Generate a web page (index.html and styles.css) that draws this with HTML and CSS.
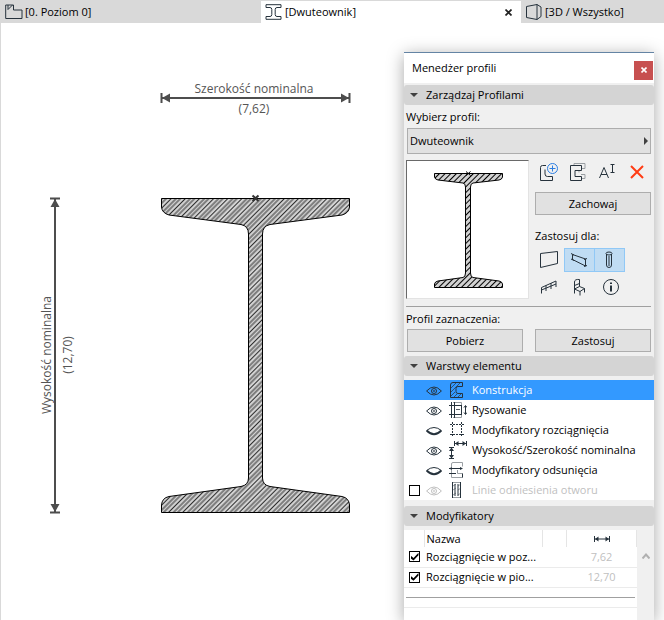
FILE: index.html
```html
<!DOCTYPE html>
<html lang="pl">
<head>
<meta charset="utf-8">
<title>Menedżer profili</title>
<link rel="stylesheet" href="styles.css">
</head>
<body>
<nav class="tabs">
  <button class="tab" type="button">
    <svg class="tab-icon" width="18" height="16" viewBox="0 0 18 16"><path d="M.7 1H8.500V6H17V14.500H.700ZM3 1v4.500L7.500 1"/></svg>
    <span>[0. Poziom 0]</span>
  </button>
  <div class="tab tab-active">
    <svg class="tab-icon" width="18" height="16" viewBox="0 0 18 16"><path d="M1 .700H16V3.500H12Q10.200 3.500 10.200 5.500V10.500Q10.200 12.500 12 12.500H16V15.300H1V12.500H5Q6.800 12.500 6.800 10.500V5.500Q6.800 3.500 5 3.500H1Z"/></svg>
    <span>[Dwuteownik]</span>
    <button class="tab-close" type="button" aria-label="Zamknij kartę"><svg width="7" height="7" viewBox="0 0 7 7"><path d="M.5.5l6 6M6.500.5l-6 6"/></svg></button>
  </div>
  <button class="tab" type="button">
    <svg class="tab-icon" width="18" height="18" viewBox="0 0 18 18"><path d="M1.500 3.500L12 1.500V16.500L1.500 14.500ZM12 1.500L16 4V13.500L12 16.500"/></svg>
    <span>[3D / Wszystko]</span>
  </button>
</nav>

<main class="canvas">
  <svg class="drawing" width="400" height="596" viewBox="1 23 400 596" role="img" aria-label="Przekrój dwuteownika">
    <defs>
      <pattern id="hatch" width="10" height="40" patternUnits="userSpaceOnUse" patternTransform="rotate(45)">
        <path d="M1.500 0V40M5 0V40M8 0V40" stroke="#000" stroke-width=".8"/>
      </pattern>
      <path id="beam" d="M161.500 198.500H349.500V207Q349 213 342 215L270 224.500Q262.500 226 262.500 234V478Q262.500 485 270 486.500L342 496.500Q349 498 349.500 505V512.500H161.500V505Q162 498 169 496.500L241 486.500Q248.500 485 248.500 478V234Q248.500 226 241 224.500L169 215Q162 213 161.500 207Z"/>
    </defs>
    <use href="#beam" class="body-fill"/>
    <use href="#beam" class="profile" fill="url(#hatch)"/>
    <path class="origin" d="M252.500 195.500L258.500 201M258.500 195.500L252.500 201"/>
    <g class="dimension">
      <path d="M162 98H349M55 199V512" class="dim-line"/>
      <path d="M161.500 93V103M349.500 93V103M50 198.500H60M50 512.500H60" class="dim-end"/>
      <path d="M162 98L170 93.500V102.500ZM349 98L341 93.500V102.500ZM55 199L50.500 207H59.500ZM55 512L50.500 504H59.500Z" class="dim-head"/>
      <text x="254" y="93">Szerokość nominalna</text>
      <text x="254" y="113">(7,62)</text>
      <text transform="translate(51 355) rotate(-90)">Wysokość nominalna</text>
      <text transform="translate(72 355) rotate(-90)">(12,70)</text>
    </g>
  </svg>
</main>

<aside class="palette">
  <header class="palette-title">
    <h1>Menedżer profili</h1>
    <button class="palette-close" type="button" aria-label="Zamknij"><svg width="6" height="6" viewBox="0 0 6 6"><path d="M.5.5l5 5M5.500.5l-5 5"/></svg></button>
  </header>

  <section>
    <button class="section-head" type="button"><span class="caret"></span>Zarządzaj Profilami</button>
    <div class="manage">
      <label class="caption" for="profile">Wybierz profil:</label>
      <div class="picker">
        <select id="profile"><option>Dwuteownik</option></select>
      </div>
      <div class="profile-row">
        <div class="preview">
          <svg width="121" height="137" viewBox="407 161 121 137">
            <defs>
              <pattern id="hatch-small" width="4" height="40" patternUnits="userSpaceOnUse" patternTransform="rotate(45)">
                <path d="M1.500 0V40" stroke="#000" stroke-width="1"/>
              </pattern>
              <path id="beam-small" d="M434.500 173.500H502.500V177Q502 179.500 499 180L473 183Q470.500 183.500 470.500 187V273Q470.500 277 473 277.500L499 281Q502 281.500 502.500 284V287.500H434.500V284Q435 281.500 438 281L463 277.500Q465.500 277 465.500 273V187Q465.500 183.500 463 183L438 180Q435 179.500 434.500 177Z"/>
            </defs>
            <use href="#beam-small" class="body-fill"/>
            <use href="#beam-small" class="profile" fill="url(#hatch-small)"/>
            <path class="origin-small" d="M466 171.500L470.500 175.500M470.500 171.500L466 175.500"/>
          </svg>
        </div>
        <div class="actions">
          <div class="tools">
            <button type="button" aria-label="Nowy profil"><svg width="20" height="20" viewBox="0 0 20 20"><path d="M7 3.500H3.500Q1.500 3.500 1.500 5.500V18.500H13.500V14.500H8.500Q6 14.500 6 12V7.500"/><circle class="blue" cx="13.500" cy="6.500" r="5"/><path class="blue" d="M13.500 3.500V9.500M10.500 6.500H16.500"/></svg></button>
            <button type="button" aria-label="Powiel profil"><svg width="20" height="20" viewBox="0 0 20 20"><path class="soft" d="M6 4V1.500H17V6.500H14M11 10.500V8.500M13 12.500H17V16.500H14"/><path d="M2.500 3.500H13.500V8.500H7V14.500H13.500V18.500H2.500Z"/></svg></button>
            <button type="button" aria-label="Zmień nazwę"><svg width="20" height="20" viewBox="0 0 20 20"><path d="M1.500 16L6 5.500L10.500 16M3 12.500H9M12.500 2.500H16.500M12.500 10.500H16.500M14.500 2.500V10.500"/></svg></button>
            <button type="button" aria-label="Usuń profil"><svg width="20" height="20" viewBox="0 0 20 20"><path class="red" d="M4 4L16 16M16 4L4 16"/></svg></button>
          </div>
          <button class="push" type="button">Zachowaj</button>
          <p class="caption use-for">Zastosuj dla:</p>
          <div class="uses">
            <button type="button" aria-label="Ściana"><svg width="20" height="20" viewBox="0 0 20 20"><path d="M.5 3.500L17.500 1.500V13.500L.5 17.500Z"/></svg></button>
            <button type="button" aria-label="Belka" aria-pressed="true"><svg width="20" height="20" viewBox="0 0 20 20"><path d="M2.500 4.500V10M2.500 4.500L15.500 9M2.500 9.500L15.500 16M15.500 9V16M1 3.500L4 5M1 9L4 10.500M14 9.500L17 8.500M14 16.500L17 15.500"/></svg></button>
            <button type="button" aria-label="Słup" aria-pressed="true"><svg width="20" height="20" viewBox="0 0 20 20"><path d="M6.500 4V15Q6.500 17.500 9 17.500T11.500 15V4M9 6V16"/><ellipse cx="9" cy="3.500" rx="3" ry="1.500"/></svg></button>
            <button type="button" aria-label="Balustrada"><svg width="20" height="20" viewBox="0 0 20 20"><path d="M1.500 16.500V10.500L16 4V10M1.500 13L16 7M6 8.500V14M11 6V12"/></svg></button>
            <button type="button" aria-label="Obiekt"><svg width="20" height="20" viewBox="0 0 20 20"><path d="M4.500 16.500V5Q4.500 2 9.500 2.500V9.500L4.500 12L10 14.500L14.500 11.500V15.500M14.500 11.500L9.500 9.500M10 14.500V18.500M4.500 8.500L9.500 6.500"/></svg></button>
            <button type="button" aria-label="Informacje"><svg width="20" height="20" viewBox="0 0 20 20"><circle cx="11" cy="10" r="7.500"/><path class="heavy" d="M11 8.500V14.500M11 5.500V7"/></svg></button>
          </div>
        </div>
      </div>
      <hr>
      <p class="caption">Profil zaznaczenia:</p>
      <div class="pair">
        <button class="push" type="button">Pobierz</button>
        <button class="push" type="button">Zastosuj</button>
      </div>
    </div>
  </section>

  <section>
    <button class="section-head" type="button"><span class="caret"></span>Warstwy elementu</button>
    <svg class="symbols" width="0" height="0" aria-hidden="true">
      <symbol id="eye" viewBox="0 0 16 10"><path d="M.6 5Q8-3 15.400 5Q8 13 .6 5Z"/><circle cx="8" cy="5" r="2.500"/><circle cx="8" cy="5" r=".5"/></symbol>
      <symbol id="eye-shut" viewBox="0 0 16 10"><path d="M.6 4.500Q8-1.500 15.400 4.500"/><path d="M.6 4.500Q8 12 15.400 4.500" stroke-width="2"/></symbol>
    </svg>
    <ul class="layers">
      <li class="layer layer-selected">
        <svg class="eye" width="16" height="10"><use href="#eye"/></svg>
        <svg class="kind" width="18" height="18" viewBox="0 0 18 18"><path d="M1.500 4Q1.500 1.500 4 1.500H13.500V5.500H9Q7 5.500 7 7.500V10.500Q7 12.500 9 12.500H13.500V16.500H1.500Z"/><path d="M2 7L7 2M2 11L11 2M2 15L6 11M5 16L8 13M9 16L13 12" stroke-width=".7"/></svg>
        <span>Konstrukcja</span>
      </li>
      <li class="layer">
        <svg class="eye" width="16" height="10"><use href="#eye"/></svg>
        <svg class="kind" width="18" height="18" viewBox="0 0 18 18"><path class="soft" d="M4 1.500H12.500V4M4 16.500H12.500V14"/><path d="M0 4.500H13M0 13.500H13M2.500 1V17M5.500 1V17M12.500 4V14"/><path d="M7 9l1-1 1 1 1-1 1 1" stroke-width=".8"/><path d="M16.500 5V13M15 6.500L16.500 4.500L18 6.500M15 11.500L16.500 13.500L18 11.500"/></svg>
        <span>Rysowanie</span>
      </li>
      <li class="layer">
        <svg class="eye" width="16" height="10"><use href="#eye-shut"/></svg>
        <svg class="kind" width="18" height="18" viewBox="0 0 18 18"><path stroke-dasharray="2 1" d="M1 3.500H15M1 13.500H15M3.500 1V16M12.500 1V16"/></svg>
        <span>Modyfikatory rozciągnięcia</span>
      </li>
      <li class="layer">
        <svg class="eye" width="16" height="10"><use href="#eye"/></svg>
        <svg class="kind" width="18" height="18" viewBox="0 0 18 18"><path d="M0 6.500H5M0 17.500H5M2.500 7V17M5.500 0V5M17.500 0V5M6 2.500H17"/><path class="solid" d="M2.500 6.500L0 10H5ZM2.500 17.500L0 14H5ZM6 2.500L9.500 0V5ZM17 2.500L13.500 0V5Z"/></svg>
        <span>Wysokość/Szerokość nominalna</span>
      </li>
      <li class="layer">
        <svg class="eye" width="16" height="10"><use href="#eye-shut"/></svg>
        <svg class="kind" width="18" height="18" viewBox="0 0 18 18"><path class="soft" d="M2.500 6V3Q2.500 1.500 4 1.500H13.500V5.500M13.500 12.500H8.500V9M2.500 9V16.500H13.500"/><path d="M0 7.500H13M0 12.500H7M13.500 12.500V16.500"/><path class="solid" d="M0 7.500L3 6V9ZM14 7.500L11 6V9Z"/></svg>
        <span>Modyfikatory odsunięcia</span>
      </li>
      <li class="layer layer-dim">
        <input type="checkbox" aria-label="Linie odniesienia otworu">
        <svg class="eye" width="16" height="10"><use href="#eye"/></svg>
        <svg class="kind" width="18" height="18" viewBox="0 0 18 18"><path class="soft" d="M3 1.500H12M3 16.500H12M4 5L7 3M4 9L7 7M4 14L7 12M9 5L12 3M9 9L12 7M9 14L12 12"/><path d="M3.500 1V17M11.500 1V17M6 3V15M9 3V15"/></svg>
        <span>Linie odniesienia otworu</span>
      </li>
    </ul>
  </section>

  <section class="modifiers">
    <button class="section-head" type="button"><span class="caret"></span>Modyfikatory</button>
    <div class="table-area">
      <div class="table-box">
        <table>
          <colgroup><col class="c-check"><col><col class="c-gap"><col class="c-value"></colgroup>
          <thead><tr>
            <th></th><th>Nazwa</th><th></th>
            <th class="value"><svg width="16" height="6" viewBox="0 0 16 6" role="img" aria-label="Długość"><path d="M.5 0V6M15.500 0V6M1 3H15"/><path class="solid" d="M1 3L4.500.5V5.500ZM15 3L11.500.5V5.500Z"/></svg></th>
          </tr></thead>
          <tbody>
            <tr><td><input type="checkbox" checked aria-label="Rozciągnięcie w poziomie"></td><td colspan="2">Rozciągnięcie w poz...</td><td class="value">7,62</td></tr>
            <tr><td><input type="checkbox" checked aria-label="Rozciągnięcie w pionie"></td><td colspan="2">Rozciągnięcie w pio...</td><td class="value">12,70</td></tr>
            <tr class="divider"><td colspan="4"><hr></td></tr>
          </tbody>
        </table>
      </div>
      <div class="scrollbar"><svg width="8" height="6" viewBox="0 0 8 6"><path d="M.5 5.500L4 1.500L7.500 5.500"/></svg></div>
    </div>
  </section>
</aside>
</body>
</html>
```
FILE: styles.css
```css
* {
  box-sizing: border-box;
}

body {
  margin: 0;
  min-height: 100vh;
  display: flex;
  flex-direction: column;
  position: relative;
  overflow: hidden;
  background: #fff;
  color: #000;
  font: 11px/16px "Open Sans", "Noto Sans", sans-serif;
}

button,
select {
  margin: 0;
  padding: 0;
  border: 0;
  background: none;
  color: inherit;
  font: inherit;
}

svg {
  display: block;
  flex: none;
  fill: none;
  stroke: #26323c;
}

h1,
p,
ul {
  margin: 0;
  padding: 0;
  font-size: inherit;
  font-weight: normal;
}

hr {
  margin: 0;
  border: 0;
  border-top: 1px solid #a0a0a0;
}

/* Document tabs */
.tabs {
  display: grid;
  grid-template-columns: 260px 260px 1fr;
  height: 23px;
  padding-left: 1px;
  border-top: 1px solid #d9d9d9;
  background: #d9d9d9;
}

.tab {
  display: flex;
  align-items: center;
  gap: 2px;
  padding-left: 4px;
}

.tab-active {
  background: #fff;
}

.tab-close {
  margin-left: auto;
  padding: 4px 9px;
}

.tab-close path {
  stroke: #222;
  stroke-width: 1.700;
}

/* Drawing */
.canvas {
  flex: 1;
  border-left: 1px solid #d9d9d9;
}

.body-fill {
  fill: #d2d2d2;
  stroke: none;
}

.profile {
  stroke: #000;
}

.origin {
  stroke: #333;
  stroke-width: 2;
}

.origin-small {
  stroke: #000;
}

.dim-line {
  stroke: #4d4d4d;
  stroke-width: 2;
}

.dim-end {
  stroke: #4d4d4d;
  stroke-width: 2;
}

.dim-head {
  fill: #4d4d4d;
  stroke: none;
}

.dimension text {
  fill: #555;
  stroke: none;
  font-size: 12px;
  text-anchor: middle;
}

/* Floating palette */
.palette {
  position: absolute;
  top: 52px;
  right: 10px;
  bottom: 0;
  width: 250px;
  display: flex;
  flex-direction: column;
  border-top: 1px solid #6484a4;
  background: #f0f0f0;
  box-shadow: 0 3px 16px rgba(0, 0, 0, .35);
}

.palette-title {
  display: flex;
  align-items: center;
  justify-content: space-between;
  height: 30px;
  margin-bottom: 2px;
  padding: 0 1px 0 8px;
  background: #fff;
}

.palette-close {
  display: grid;
  place-items: center;
  width: 19px;
  height: 19px;
  margin-top: 4px;
  background: #c75050;
}

.palette-close path {
  stroke: #fff;
  stroke-width: 1.600;
}

.section-head {
  display: flex;
  align-items: center;
  gap: 8px;
  width: 100%;
  height: 20px;
  padding-left: 6px;
  border-radius: 3px;
  background: #d4d4d4;
}

.caret {
  border: 4px solid transparent;
  border-top-color: #404040;
  border-bottom: 0;
}

.manage {
  padding: 4px 3px 4px 2px;
}

.caption {
  display: block;
}

.picker {
  position: relative;
  margin: 3px 0 6px 1px;
}

.picker::after {
  content: "";
  position: absolute;
  top: 9px;
  right: 3px;
  border: 4px solid transparent;
  border-left-color: #404040;
  border-right: 0;
  pointer-events: none;
}

.picker select {
  appearance: none;
  display: block;
  width: 100%;
  height: 26px;
  padding-left: 2px;
  border: 1px solid #adadad;
  background: #e1e1e1;
}

.profile-row {
  display: flex;
  gap: 6px;
}

.preview {
  height: 139px;
  border: 1px solid #e3e3e3;
  border-top-color: #696969;
  border-left-color: #696969;
  background: #fff;
}

.actions {
  flex: 1;
}

.tools {
  display: flex;
  justify-content: space-between;
  padding: 2px 4px 0 4px;
}

.push {
  display: block;
  width: 100%;
  height: 23px;
  border: 1px solid #adadad;
  background: #e1e1e1;
}

.tools + .push {
  margin-top: 10px;
}

.use-for {
  margin: 13px 0 4px;
}

.uses {
  display: grid;
  grid-template-columns: 30px 30px 30px;
  row-gap: 3px;
}

.uses button {
  display: grid;
  place-items: center;
  height: 24px;
  border: 1px solid transparent;
}

.uses button + button {
  margin-left: -1px;
}

.uses [aria-pressed="true"] {
  border-color: #90c8f6;
  background: #c0dcf3;
}

.soft {
  stroke: #9a9fa3;
}

.blue {
  stroke: #2a7de1;
}

.red {
  stroke: #ff3c14;
  stroke-width: 2;
}

.heavy {
  stroke-width: 2;
}

.solid {
  fill: #26323c;
  stroke: none;
}

.profile-row + hr {
  margin: 7px 0 4px;
}

.pair {
  display: grid;
  grid-template-columns: 1fr 1fr;
  gap: 12px;
  margin: 2px 0 0 1px;
}

/* Layer list */
.symbols {
  position: absolute;
}

.layers {
  margin: 4px 0 6px;
  background: #fff;
  list-style: none;
}

.layer {
  display: grid;
  grid-template-columns: 22px 23px 23px 1fr;
  align-items: center;
  height: 20px;
}

.eye {
  grid-column: 2;
  margin-top: 2px;
}

.layer-selected {
  background: #3399ff;
  color: #fff;
}

.layer-dim {
  color: #bfbfbf;
}

.layer-dim .eye {
  stroke: #bfbfbf;
}

input[type="checkbox"] {
  appearance: none;
  display: grid;
  place-items: center;
  width: 11px;
  height: 11px;
  margin: 0 0 0 5px;
  border: 1px solid #000;
  background: #fff;
}

input[type="checkbox"]:checked::before {
  content: "";
  width: 8px;
  height: 8px;
  background: #000;
  clip-path: polygon(0 35%, 38% 65%, 100% 0, 100% 32%, 38% 98%, 0 68%);
}

/* Modifier table */
.modifiers,
.table-area {
  flex: 1;
  display: flex;
  flex-direction: column;
}

.table-area {
  flex-direction: row;
  margin-top: 4px;
}

.table-box {
  flex: 1;
  background: #fff;
}

table {
  width: 100%;
  table-layout: fixed;
  border-collapse: collapse;
}

.c-check {
  width: 20px;
}

.c-gap {
  width: 24px;
}

.c-value {
  width: 70px;
}

th,
td {
  height: 20px;
  padding: 0;
  font-weight: normal;
  text-align: left;
  white-space: nowrap;
}

th {
  height: 17px;
  border-right: 1px solid #e5e5e5;
}

td {
  border-bottom: 1px solid #ebebeb;
}

th:nth-child(2),
td:nth-child(2) {
  padding-left: 2px;
}

.value {
  color: #bfbfbf;
  text-align: center;
}

.value svg {
  margin: auto;
}

.divider hr {
  margin: 0 2px;
  border-color: #a0a0a0;
}

.scrollbar {
  width: 17px;
  padding: 23px 0 0 5px;
}

.scrollbar path {
  stroke: #b0b0b0;
  stroke-width: 2;
}
```
